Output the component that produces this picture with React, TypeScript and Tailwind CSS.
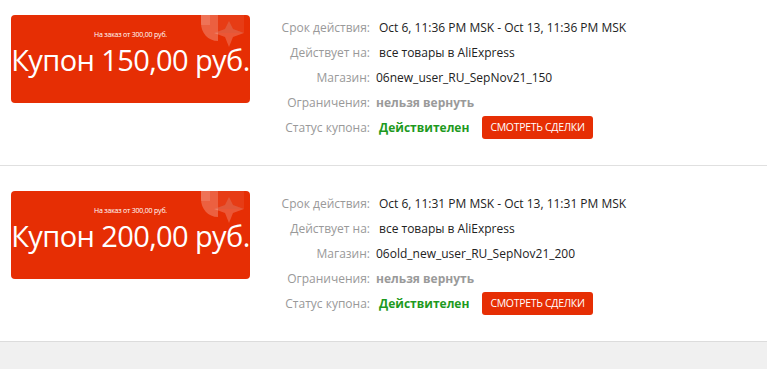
import React from "react";

const Decor = () => (
  <svg className="absolute right-[4px] top-0" width="46" height="46" viewBox="0 0 46 46">
    <path d="M1 0 H18 V26 C8 26 1 18 1 8 Z" fill="#ffffff" fillOpacity="0.24" />
    <path d="M1 0 H10 V10 H1 Z" fill="#ffffff" fillOpacity="0.12" />
    <path d="M18 0 H44 V18 H18 Z" fill="#ffffff" fillOpacity="0.07" />
    <path d="M29 6 L33 14 L44 18 L33 22 L29 32 L25 22 L14 18 L25 14 Z" fill="#ffffff" fillOpacity="0.2" />
    <path d="M29 6 L33 14 L44 18 L14 18 L25 14 Z" fill="#b01800" fillOpacity="0.15" />
  </svg>
);

type Coupon = {
  amount: string;
  period: string;
  store: string;
};

const coupons: Coupon[] = [
  {
    amount: "Купон 150,00 руб.",
    period: "Oct 6, 11:36 PM MSK - Oct 13, 11:36 PM MSK",
    store: "06new_user_RU_SepNov21_150",
  },
  {
    amount: "Купон 200,00 руб.",
    period: "Oct 6, 11:31 PM MSK - Oct 13, 11:31 PM MSK",
    store: "06old_new_user_RU_SepNov21_200",
  },
];

const Row = ({ label, children }: { label: string; children: React.ReactNode }) => (
  <div className="flex h-[25px] items-center">
    <div className="w-[108px] shrink-0 text-right text-[#999]">{label}</div>
    <div className="ml-[9px] flex items-center">{children}</div>
  </div>
);

const CouponItem = ({ c, first }: { c: Coupon; first: boolean }) => (
  <div
    className={
      first
        ? "flex border-b border-[#e0e0e0] pl-[11px] pt-[15px] pb-[25px]"
        : "flex border-b border-[#dcdcdc] pl-[11px] pt-[25px] pb-[25px]"
    }
  >
    <div className="relative h-[88px] w-[239px] shrink-0 overflow-hidden rounded-[4px] bg-[#e62e04] text-white">
      <Decor />
      <div className="relative flex h-full flex-col items-center pt-[15px]">
        <div className="text-[7px] leading-[10px] tracking-[-0.2px]">На заказ от 300,00 руб.</div>
        <div className="mt-[2px] whitespace-nowrap text-[29px] leading-[35px] tracking-[-0.6px]">{c.amount}</div>
      </div>
    </div>
    <div className="ml-[12px] text-[12px] text-[#222]">
      <Row label="Срок действия:">
        <span>{c.period}</span>
      </Row>
      <Row label="Действует на:">
        <span>все товары в AliExpress</span>
      </Row>
      <Row label="Магазин:">
        <span className="ml-[-3px]">{c.store}</span>
      </Row>
      <Row label="Ограничения:">
        <span className="ml-[-3px] font-bold text-[#9a9a9a]">нельзя вернуть</span>
      </Row>
      <Row label="Статус купона:">
        <span className="font-bold text-[#1e9a1e]">Действителен</span>
        <button className="ml-[13px] h-[23px] rounded-[3px] bg-[#e62e04] px-[8px] text-[10.5px] tracking-[-0.3px] text-white">
          СМОТРЕТЬ СДЕЛКИ
        </button>
      </Row>
    </div>
  </div>
);

export default function App() {
  return (
    <div
      className="h-[369px] w-[767px] overflow-hidden bg-[#f0f0f0]"
      style={{ fontFamily: '"Open Sans", "Noto Sans", sans-serif' }}
    >
      <div className="bg-white">
        {coupons.map((c, i) => (
          <CouponItem key={i} c={c} first={i === 0} />
        ))}
      </div>
    </div>
  );
}
